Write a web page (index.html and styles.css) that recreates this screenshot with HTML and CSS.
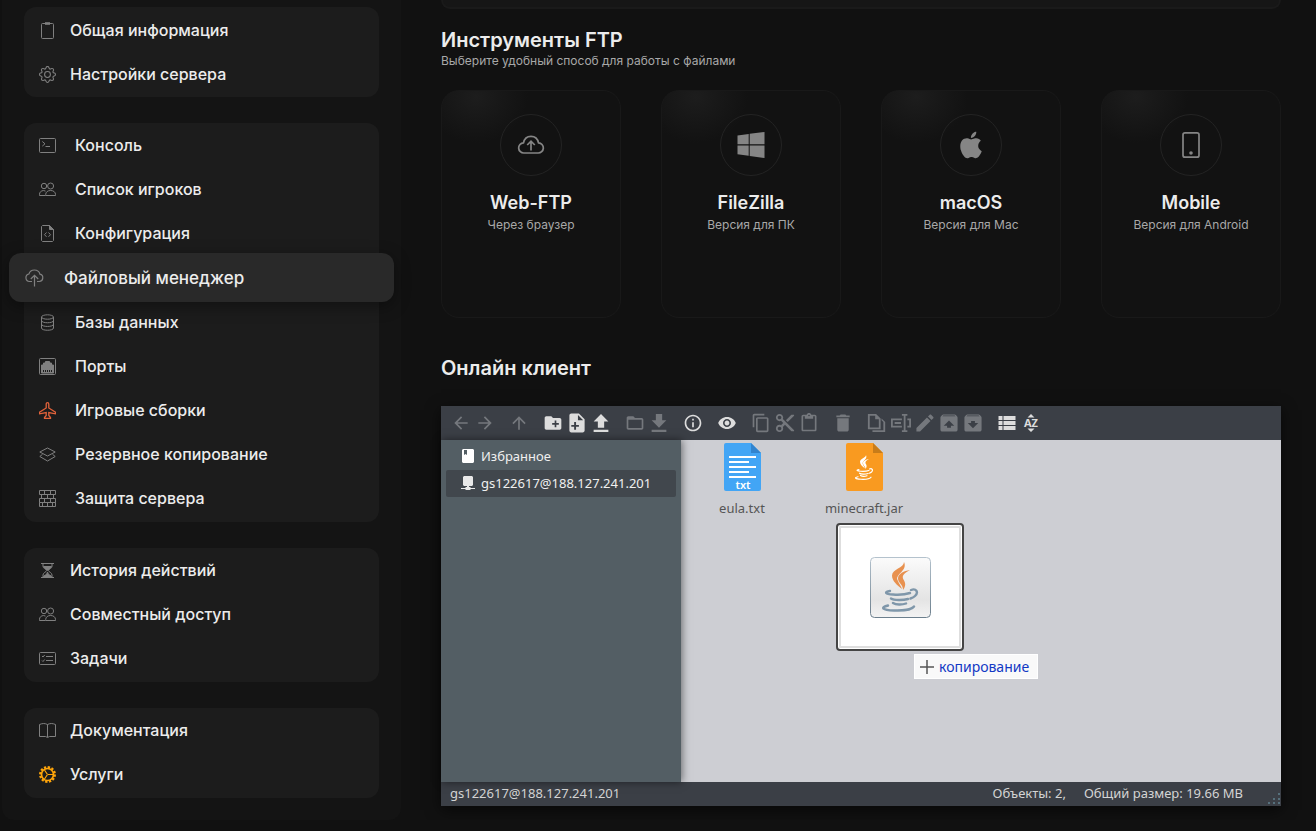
FILE: index.html
```html
<!DOCTYPE html>
<html lang="ru">
<head>
<meta charset="utf-8">
<title>Файловый менеджер</title>
<link rel="stylesheet" href="styles.css">
</head>
<body>
<svg class="sprite" aria-hidden="true">
  <symbol id="users" viewBox="0 0 17 17"><g fill="none" stroke="currentColor"><circle cx="5" cy="5" r="2.700"/><circle cx="11.600" cy="5" r="3"/><path d="M6.700 14.500v-1c0-2.400 2-4 4.900-4s4.900 1.600 4.900 4v1zM6.500 14.500h-6v-1.200c0-2 1.500-3.600 4-3.800l2 .6"/></g></symbol>
  <symbol id="java" viewBox="0 0 40 50">
    <g class="steam" fill="currentColor" stroke="none">
      <path d="M24 0c4 9-9 12-6.500 18 1 3 3.500 6 4.500 9-5-4-10-8-10-13.500C12 7 24 6 24 0z"/>
      <path d="M30 8c-5 3-8 5-7 8.500 1 2.500 4.500 5.500 0 11.500.5-5-5-7-5-11.500C18 11.500 24 9 30 8z"/>
    </g>
    <g fill="none" stroke-linecap="round" stroke-width="2.400"><path d="M10 29c-6 1-5 3 3 3.500 7 .5 13-.2 17-1.500M31 28c5-2 8 2 4 6-1.500 1.500-3 2-4.500 2.500M11 36.500c3 2 12 2 17 .5M13 41c3 2 9 2 13 .5M8 43.500c-8 2-6 4.500 6 5 9 .4 18-1 20-4"/></g>
  </symbol>
</svg>
<div class="layout">
  <nav class="sidebar" aria-label="Меню сервера">
    <div class="menu">
      <a class="item" href="#"><svg viewBox="0 0 17 17"><rect x="2.500" y="1.500" width="12" height="15" rx="1"/><path d="M6 1.500h5" stroke-width="2.600"/></svg>Общая информация</a>
      <a class="item" href="#"><svg class="solid" viewBox="0 0 16 16"><path d="M8 4.754a3.246 3.246 0 1 0 0 6.492 3.246 3.246 0 0 0 0-6.492zM5.754 8a2.246 2.246 0 1 1 4.492 0 2.246 2.246 0 0 1-4.492 0z"/><path d="M9.796 1.343c-.527-1.790-3.065-1.790-3.592 0l-.094.319a.873.873 0 0 1-1.255.52l-.292-.16c-1.640-.892-3.433.902-2.540 2.541l.159.292a.873.873 0 0 1-.52 1.255l-.319.094c-1.790.527-1.790 3.065 0 3.592l.319.094a.873.873 0 0 1 .52 1.255l-.16.292c-.892 1.640.901 3.434 2.541 2.540l.292-.159a.873.873 0 0 1 1.255.52l.094.319c.527 1.790 3.065 1.790 3.592 0l.094-.319a.873.873 0 0 1 1.255-.52l.292.16c1.640.893 3.434-.902 2.540-2.541l-.159-.292a.873.873 0 0 1 .52-1.255l.319-.094c1.790-.527 1.790-3.065 0-3.592l-.319-.094a.873.873 0 0 1-.52-1.255l.16-.292c.893-1.640-.902-3.433-2.541-2.540l-.292.159a.873.873 0 0 1-1.255-.52l-.094-.319zm-2.633.283c.246-.835 1.428-.835 1.674 0l.094.319a1.873 1.873 0 0 0 2.693 1.115l.291-.16c.764-.415 1.600.42 1.184 1.185l-.159.292a1.873 1.873 0 0 0 1.116 2.692l.318.094c.835.246.835 1.428 0 1.674l-.319.094a1.873 1.873 0 0 0-1.115 2.693l.16.291c.415.764-.42 1.600-1.185 1.184l-.291-.159a1.873 1.873 0 0 0-2.693 1.116l-.094.318c-.246.835-1.428.835-1.674 0l-.094-.319a1.873 1.873 0 0 0-2.692-1.115l-.292.16c-.764.415-1.600-.42-1.184-1.185l.159-.291A1.873 1.873 0 0 0 1.945 8.930l-.319-.094c-.835-.246-.835-1.428 0-1.674l.319-.094A1.873 1.873 0 0 0 3.060 4.377l-.16-.292c-.415-.764.42-1.600 1.185-1.184l.292.159a1.873 1.873 0 0 0 2.692-1.115l.094-.319z"/></svg>Настройки сервера</a>
    </div>
    <div class="menu menu-wide">
      <a class="item" href="#"><svg viewBox="0 0 17 17"><rect x=".5" y="1.500" width="16" height="14" rx="1"/><path d="M3.300 4.500l2.700 2.300-2.700 2.300M6.500 9.500h4.500"/></svg>Консоль</a>
      <a class="item" href="#"><svg><use href="#users"/></svg>Список игроков</a>
      <a class="item" href="#"><svg viewBox="0 0 17 17"><path d="M3.500.5h7l4 4v11l-1 1h-10l-1-1v-14z"/><path class="fill" d="M10.500.5l4 4h-4z"/><path d="M7.500 7.500L5.500 9.700l2 2.100M9.500 7.500l2 2.200-2 2.100"/></svg>Конфигурация</a>
      <a class="item active" href="#" aria-current="page"><svg viewBox="0 0 19 18"><path d="M7 12.500H4.500a3.800 3.800 0 0 1-.6-7.500C4.700 2.500 6.700 1 9.300 1c2.900 0 5 1.600 5.600 4.200a3.700 3.700 0 0 1-.6 7.300H12M9.500 17.500V6.500M5.800 10l3.700-3.700 3.700 3.700" stroke-width="1.200"/></svg>Файловый менеджер</a>
      <a class="item" href="#"><svg viewBox="0 0 17 17"><ellipse cx="8.500" cy="3" rx="6" ry="2.200"/><path d="M2.500 3v11c0 3 12 3 12 0V3M2.500 6.500c0 3 12 3 12 0M2.500 10.200c0 3 12 3 12 0"/></svg>Базы данных</a>
      <a class="item" href="#"><svg viewBox="0 0 17 17"><rect x=".5" y=".5" width="16" height="16" rx="1"/><path class="fill" d="M2.500 7h2V5h2V3.500h4V5h2v2h2v8h-12z"/><path class="cut" d="M4.500 12v2M6.500 12v2M8.500 12v2M10.500 12v2M12.500 12v2"/></svg>Порты</a>
      <a class="item plane" href="#"><svg viewBox="0 0 17 17"><path d="M7.200 6V2.200c0-2 2.600-2 2.600 0V6l6.700 4.200v1.600L9.800 10.500v3l1.700 2v1h-6v-1l1.700-2v-3L.5 11.800v-1.600z"/></svg>Игровые сборки</a>
      <a class="item" href="#"><svg viewBox="0 0 17 17"><path d="M.8 6l7.700-4 7.700 4-7.700 4zM3.500 8.300L.8 10.500l7.700 4.500 7.700-4.500-2.700-2.200"/></svg>Резервное копирование</a>
      <a class="item" href="#"><svg viewBox="0 0 17 17"><path d="M.5.5h16v4H.5zM2.500 4.500v4M14.500 4.500v4M8.500 4.500v4M.5 8.500h16v4H.5zM5.500.5v4M11.500.5v4M5.500 8.500v4M11.500 8.500v4M.5 12.500h16v4H.5zM8.500 12.500v4M3.500 12.500v4M13.500 12.500v4"/></svg>Защита сервера</a>
    </div>
    <div class="menu">
      <a class="item" href="#"><svg viewBox="0 0 17 17"><path d="M2 1.500h13M2 15.500h13M4 2v2.500c0 2 3.500 2.500 3.500 4S4 10.500 4 13v2M13 2v2.500c0 2-3.500 2.500-3.500 4s3.500 2 3.500 4.500v2"/><path class="fill" d="M4.500 4.500h8l-4 4zM4.500 15c0-2 4-2 4-5 0 3 4 3 4 5z"/></svg>История действий</a>
      <a class="item" href="#"><svg><use href="#users"/></svg>Совместный доступ</a>
      <a class="item" href="#"><svg viewBox="0 0 17 17"><rect x=".5" y="2.500" width="16" height="12" rx="1"/><path d="M3 6l1 1 1.700-2M3 10.500l1 1 1.700-2M7 6.500h7M7 10.500h7"/></svg>Задачи</a>
    </div>
    <div class="menu">
      <a class="item" href="#"><svg viewBox="0 0 17 17"><path d="M.5 2.500c3-1.300 5.500-1.300 8 0 2.500-1.300 5-1.300 8 0v12h-6l-2 1-2-1h-6zM8.500 2.500v12.500"/></svg>Документация</a>
      <a class="item gear" href="#"><svg viewBox="0 0 17 17"><circle cx="8.500" cy="8.500" r="7.300" stroke-width="2.300" stroke-dasharray="2.300 1.522"/><circle cx="8.500" cy="8.500" r="6" stroke-width="1.700"/><path d="M9 8.500h5M8.500 8.500L5.500 4M8.500 8.500L5.500 13" stroke-width="1.200"/></svg>Услуги</a>
    </div>
  </nav>

  <main class="content">
    <div class="panel-end"></div>
    <section class="tools">
      <h2>Инструменты FTP</h2>
      <p class="lead">Выберите удобный способ для работы с файлами</p>
      <div class="cards">
        <a class="card" href="#"><span class="ring"><svg viewBox="0 0 28 28"><path d="M7 22a5.100 5.100 0 0 1-.5-10.200C7.300 7.800 10.300 5.300 14 5.300s6.700 2.500 7.500 6.500A5.100 5.100 0 0 1 21 22zM14 19.500v-9M10.200 14l3.800-3.800 3.800 3.800" fill="none" stroke="currentColor" stroke-width="1.700"/></svg></span><h3>Web-FTP</h3><p>Через браузер</p></a>
        <a class="card" href="#"><span class="ring"><svg viewBox="0 0 28 28"><path d="M.5 4.500L11.700 3v10.300H.5zM12.700 2.800L27.500 1v12.300H12.700zM.5 14.500h11.200v10.300L.5 23.300zM12.700 14.500h14.800V27l-14.800-2z" fill="currentColor"/></svg></span><h3>FileZilla</h3><p>Версия для ПК</p></a>
        <a class="card" href="#"><span class="ring"><svg viewBox="-.5 -.5 17 17"><path d="M11.182.008C11.148-.03 9.923.023 8.857 1.180c-1.066 1.156-.902 2.482-.878 2.516s1.520.087 2.475-1.258.762-2.391.728-2.430m3.314 11.733c-.048-.096-2.325-1.234-2.113-3.422s1.675-2.789 1.698-2.854-.597-.79-1.254-1.157a3.700 3.700 0 0 0-1.563-.434c-.108-.003-.483-.095-1.254.116-.508.139-1.653.589-1.968.607-.316.018-1.256-.522-2.267-.665-.647-.125-1.333.131-1.824.328-.49.196-1.422.754-2.074 2.237-.652 1.482-.311 3.830-.067 4.560s.625 1.924 1.273 2.796c.576.984 1.340 1.667 1.659 1.899s1.219.386 1.843.067c.502-.308 1.408-.485 1.766-.472.357.013 1.061.154 1.782.539.571.197 1.111.115 1.652-.105.541-.221 1.324-1.059 2.238-2.758q.52-1.185.473-1.282" fill="currentColor"/></svg></span><h3>macOS</h3><p>Версия для Mac</p></a>
        <a class="card" href="#"><span class="ring"><svg viewBox="0 0 28 28"><rect x="6" y="1.800" width="16" height="24.400" rx="2" fill="none" stroke="currentColor" stroke-width="1.700"/><circle cx="14" cy="22" r="1.800" fill="currentColor"/></svg></span><h3>Mobile</h3><p>Версия для Android</p></a>
      </div>
    </section>

    <section class="client">
      <h2>Онлайн клиент</h2>
      <div class="manager">
        <div class="toolbar" role="toolbar" aria-label="Действия с файлами">
          <div class="group">
            <button aria-label="Назад" disabled><svg viewBox="0 0 24 24"><path d="M20 11H7.830l5.590-5.590L12 4l-8 8 8 8 1.410-1.410L7.830 13H20v-2z"/></svg></button>
            <button aria-label="Вперёд" disabled><svg viewBox="0 0 24 24"><path d="M12 4l-1.410 1.410L16.170 11H4v2h12.170l-5.580 5.590L12 20l8-8z"/></svg></button>
          </div>
          <div class="group">
            <button aria-label="Вверх" disabled><svg viewBox="0 0 24 24"><path d="M4 12l1.410 1.410L11 7.830V20h2V7.830l5.580 5.590L20 12l-8-8-8 8z"/></svg></button>
          </div>
          <div class="group">
            <button aria-label="Новая папка"><svg viewBox="0 0 24 24"><path d="M20 6h-8l-2-2H4c-1.110 0-1.990.89-1.990 2L2 18c0 1.110.89 2 2 2h16c1.110 0 2-.89 2-2V8c0-1.110-.89-2-2-2zm-1 8h-3v3h-2v-3h-3v-2h3V9h2v3h3v2z"/></svg></button>
            <button aria-label="Новый файл"><svg viewBox="1.500 1.500 21 21"><path fill-rule="evenodd" d="M14 2H6c-1.100 0-1.990.9-1.990 2L4 20c0 1.100.89 2 1.990 2H18c1.100 0 2-.9 2-2V8l-6-6zM14 16h-3v3H9v-3H6v-2h3v-3h2v3h3zM13 9V3.500L18.500 9z"/></svg></button>
            <button aria-label="Загрузить"><svg viewBox="2.500 2 19 19"><path d="M9 16h6v-6h4l-7-7-7 7h4zm-4 2h14v2H5z"/></svg></button>
          </div>
          <div class="group">
            <button aria-label="Открыть" disabled><svg viewBox="0 0 24 24"><path d="M20 6h-8l-2-2H4c-1.100 0-1.990.9-1.990 2L2 18c0 1.100.9 2 2 2h16c1.100 0 2-.9 2-2V8c0-1.100-.9-2-2-2zm0 12H4V8h16v10z"/></svg></button>
            <button aria-label="Скачать" disabled><svg viewBox="2.500 2 19 19"><path d="M19 9h-4V3H9v6H5l7 7 7-7zM5 18v2h14v-2H5z"/></svg></button>
          </div>
          <div class="group">
            <button aria-label="Свойства"><svg viewBox="0 0 24 24"><path d="M11 17h2v-6h-2v6zm1-15C6.480 2 2 6.480 2 12s4.480 10 10 10 10-4.480 10-10S17.520 2 12 2zm0 18c-4.410 0-8-3.590-8-8s3.590-8 8-8 8 3.590 8 8-3.590 8-8 8zM11 9h2V7h-2v2z"/></svg></button>
          </div>
          <div class="group">
            <button aria-label="Просмотр"><svg viewBox="-.5 -.5 25 25"><path d="M12 4.500C7 4.500 2.730 7.610 1 12c1.730 4.390 6 7.500 11 7.500s9.270-3.110 11-7.500c-1.730-4.390-6-7.500-11-7.500zM12 17c-2.760 0-5-2.240-5-5s2.240-5 5-5 5 2.240 5 5-2.240 5-5 5zm0-8c-1.660 0-3 1.340-3 3s1.340 3 3 3 3-1.340 3-3-1.340-3-3-3z"/></svg></button>
          </div>
          <div class="group">
            <button aria-label="Копировать" disabled><svg viewBox="0 0 24 24"><path d="M16 1H4c-1.100 0-2 .9-2 2v14h2V3h12V1zm3 4H8c-1.100 0-2 .9-2 2v14c0 1.100.9 2 2 2h11c1.100 0 2-.9 2-2V7c0-1.100-.9-2-2-2zm0 16H8V7h11v14z"/></svg></button>
            <button aria-label="Вырезать" disabled><svg viewBox="1 1 22 22"><path d="M9.640 7.640c.23-.5.36-1.050.36-1.640 0-2.210-1.790-4-4-4S2 3.790 2 6s1.790 4 4 4c.59 0 1.140-.13 1.640-.36L10 12l-2.360 2.360C7.140 14.130 6.590 14 6 14c-2.210 0-4 1.790-4 4s1.790 4 4 4 4-1.790 4-4c0-.59-.13-1.140-.36-1.640L12 14l7 7h3v-1L9.640 7.640zM6 8c-1.100 0-2-.89-2-2s.9-2 2-2 2 .89 2 2-.9 2-2 2zm0 12c-1.100 0-2-.89-2-2s.9-2 2-2 2 .89 2 2-.9 2-2 2zM19 3l-6 6 2 2 7-7V3z"/></svg></button>
            <button aria-label="Вставить" disabled><svg viewBox="0 0 24 24"><path d="M19 2h-4.180C14.400.84 13.300 0 12 0c-1.300 0-2.400.84-2.820 2H5c-1.100 0-2 .9-2 2v16c0 1.100.9 2 2 2h14c1.100 0 2-.9 2-2V4c0-1.100-.9-2-2-2zm-7 0c.55 0 1 .45 1 1s-.45 1-1 1-1-.45-1-1 .45-1 1-1zm7 18H5V4h2v3h10V4h2v16z"/></svg></button>
          </div>
          <div class="group">
            <button aria-label="Удалить" disabled><svg viewBox="1.500 1.500 21 21"><path d="M6 19c0 1.100.9 2 2 2h8c1.100 0 2-.9 2-2V7H6v12zM19 4h-3.500l-1-1h-5l-1 1H5v2h14V4z"/></svg></button>
          </div>
          <div class="group">
            <button aria-label="Дублировать" disabled><svg viewBox="2 1 22 22"><path fill-rule="evenodd" d="M3 2h9l5 5v12H3zM5 4v13h10V8h-4V4zM18 7l4 4v11H8v-2h12v-9l-2-2z"/></svg></button>
            <button aria-label="Переименовать" disabled><svg viewBox="1 1 22 22"><path d="M1 7h12v2H3v6h10v2H1zm18 0h4v10h-4v-2h2V9h-2zM5 11h7v2H5zM13 2h6v2h-2v16h2v2h-6v-2h2V4h-2z"/></svg></button>
            <button aria-label="Редактировать" disabled><svg viewBox="1.500 1.500 21 21"><path d="M3 17.250V21h3.750L17.810 9.940l-3.750-3.750L3 17.250zM20.710 7.040c.39-.39.39-1.020 0-1.410l-2.340-2.340c-.39-.39-1.020-.39-1.410 0l-1.830 1.830 3.750 3.750 1.830-1.830z"/></svg></button>
            <button aria-label="Распаковать" disabled><svg viewBox="1.500 1.500 21 21"><path fill-rule="evenodd" d="M20.550 5.220l-1.390-1.680C18.880 3.210 18.470 3 18 3H6c-.47 0-.88.21-1.150.55L3.460 5.220C3.170 5.570 3 6.010 3 6.500V19c0 1.100.89 2 2 2h14c1.100 0 2-.9 2-2V6.500c0-.49-.17-.93-.45-1.280zM12 9.500l5.500 5.500H14v2h-4v-2H6.500L12 9.500zM5.120 5l.82-1h12l.93 1H5.120z"/></svg></button>
            <button aria-label="Архивировать" disabled><svg viewBox="1.500 1.500 21 21"><path fill-rule="evenodd" d="M20.550 5.220l-1.390-1.680C18.880 3.210 18.470 3 18 3H6c-.47 0-.88.21-1.150.55L3.460 5.220C3.170 5.570 3 6.010 3 6.500V19c0 1.100.89 2 2 2h14c1.100 0 2-.9 2-2V6.500c0-.49-.17-.93-.45-1.280zM12 17.500L6.500 12H10v-2h4v2h3.500L12 17.500zM5.120 5l.82-1h12l.93 1H5.120z"/></svg></button>
          </div>
          <div class="group">
            <button aria-label="Вид списком"><svg viewBox="2.500 2 20 20"><path d="M4 14h4v-4H4v4zm0 5h4v-4H4v4zM4 9h4V5H4v4zm5 5h12v-4H9v4zm0 5h12v-4H9v4zM9 5v4h12V5H9z"/></svg></button>
            <button aria-label="Сортировка"><svg viewBox="0 0 20 20"><path d="M10 1l3.500 3.500h-7zM10 19l3.500-3.500h-7z"/><text class="sort" x="10" y="14" text-anchor="middle">AZ</text></svg></button>
          </div>
        </div>
        <div class="workspace">
          <div class="tree">
            <a class="node" href="#"><svg viewBox="0 0 14 14"><path fill="#fff" fill-rule="evenodd" d="M2 0h10l1 1v12l-1 1H2l-1-1V1zM3 1v5l1.500-1L6 6V1z"/></svg>Избранное</a>
            <a class="node selected" href="#"><svg viewBox="0 0 14 14"><path fill="#e8e8e8" d="M3 0h8l1 1v8l-1 1H8v1h1l1 1h4v1h-4l-1 1H5l-1-1H0v-1h4l1-1h1v-1H3L2 9V1z"/></svg>gs122617@188.127.241.201</a>
          </div>
          <div class="files">
            <a class="file" href="#"><svg viewBox="0 0 37 48"><path fill="#42a5f5" d="M2 0h25l10 10v36a2 2 0 0 1-2 2H2a2 2 0 0 1-2-2V2a2 2 0 0 1 2-2z"/><path fill="#3284ce" d="M27 0l10 10H27z"/><path stroke="#fff" stroke-width="2" d="M5 14h27M5 19h20M5 24h27M5 29h20M5 34h27"/><text class="ext" x="19" y="46" text-anchor="middle">txt</text></svg><span>eula.txt</span></a>
            <a class="file" href="#"><svg viewBox="0 0 37 48"><path fill="#f99a20" d="M2 0h25l10 10v36a2 2 0 0 1-2 2H2a2 2 0 0 1-2-2V2a2 2 0 0 1 2-2z"/><path fill="#c87c19" d="M27 0l10 10H27z"/><use class="java-white" href="#java" x="8" y="12" width="20" height="25"/></svg><span>minecraft.jar</span></a>
            <div class="ghost"><svg viewBox="0 0 61 61"><defs><linearGradient id="tile" x2="0" y2="1"><stop stop-color="#fbfbfb"/><stop offset="0.7" stop-color="#e4e4e4"/><stop offset="1" stop-color="#f3f3f3"/></linearGradient><linearGradient id="edge" x2="0" y2="1"><stop stop-color="#b4c2cd"/><stop offset="1" stop-color="#6c7f8d"/></linearGradient></defs><rect x=".5" y=".5" width="60" height="60" rx="4" fill="url(#tile)" stroke="url(#edge)"/><use class="java-color" href="#java" x="10" y="5" width="40" height="50"/></svg></div>
            <div class="drop-hint"><svg viewBox="0 0 14 14"><path d="M7 0v14M0 7h14" stroke="#555" stroke-width="1.500"/></svg>копирование</div>
          </div>
        </div>
        <div class="status">
          <span class="path">gs122617@188.127.241.201</span>
          <span>Объекты: 2,</span>
          <span>Общий размер: 19.66 MB</span>
          <svg class="grip" viewBox="0 0 12 12"><path d="M10 0h2v2h-2zM5 5h2v2H5zM10 5h2v2h-2zM0 9h2v2H0zM5 9h2v2H5zM10 9h2v2h-2z"/></svg>
        </div>
      </div>
    </section>
  </main>
</div>
</body>
</html>
```
FILE: styles.css
```css
* { box-sizing: border-box; }

body {
  margin: 0;
  background: #111111;
  color: #ececec;
  font-family: Inter, "Liberation Sans", sans-serif;
}

a { color: inherit; text-decoration: none; }
h2, h3, p { margin: 0; }
.sprite { position: absolute; width: 0; height: 0; }

.layout { display: flex; align-items: flex-start; }

/* Side menu */
.sidebar {
  flex: 0 0 399px;
  display: flex;
  flex-direction: column;
  gap: 26px;
  margin-left: 2px;
  padding: 7px 22px 22px;
  background: #141414;
  border-radius: 0 0 12px 12px;
}

.menu { padding: 1px 0; background: #1c1c1c; border-radius: 12px; }
.menu + .menu { padding: 0 0 2px; }

.item {
  display: flex;
  align-items: center;
  gap: 14px;
  height: 44px;
  padding: 0 15px;
  font-size: 16px;
  font-weight: 500;
}

.menu-wide .item { gap: 19px; }

.item svg {
  flex: none;
  width: 17px;
  height: 17px;
  color: #808080;
  fill: none;
  stroke: currentColor;
}

.item .solid { fill: currentColor; stroke: none; }
.item .fill { fill: currentColor; }
.item .cut { stroke: #1c1c1c; }
.item.plane svg { color: #e2623a; stroke-width: 1.3; }
.item.gear svg { color: #ffa50a; }

.menu-wide .active {
  position: relative;
  gap: 20px;
  height: 49px;
  margin: -2px -15px;
  padding: 0 16px;
  background: #292929;
  border-radius: 12px;
  box-shadow: 0 4px 16px rgba(0, 0, 0, 0.4);
  font-size: 17px;
}

.item.active svg { width: 19px; height: 18px; }

/* Main column */
.content { flex: 1; min-width: 0; padding: 0 35px 0 40px; }

.panel-end {
  height: 9px;
  background: #161616;
  border: 2px solid #1a1a1a;
  border-top: 0;
  border-radius: 0 0 12px 12px;
}

h2 { font-size: 20px; font-weight: 600; line-height: 24px; }
.tools { padding-top: 19px; }
.lead { color: #a8a8a8; font-size: 12px; line-height: 18px; }

.cards {
  display: grid;
  grid-template-columns: repeat(4, 1fr);
  gap: 40px;
  margin-top: 20px;
}

.card {
  display: flex;
  flex-direction: column;
  align-items: center;
  min-height: 228px;
  padding: 23px 8px;
  border: 1px solid #191919;
  border-radius: 18px;
  background: radial-gradient(ellipse 52px 46px at 34px 6px, #1d1d1d, #121212);
  text-align: center;
}

.ring {
  display: flex;
  align-items: center;
  justify-content: center;
  width: 62px;
  height: 62px;
  border: 1px solid #232323;
  border-radius: 50%;
  color: #858585;
}

.ring svg { width: 28px; height: 28px; }

.card h3 { margin-top: 15px; font-size: 18px; font-weight: 600; line-height: 24px; }
.card p { color: #a8a8a8; font-size: 12px; line-height: 20px; }

.client { padding-top: 38px; }

/* File manager */
.manager {
  margin-top: 26px;
  font-family: "Noto Sans", "Open Sans", sans-serif;
  font-size: 13px;
  box-shadow: 0 4px 14px rgba(0, 0, 0, 0.6);
}

.toolbar {
  display: flex;
  gap: 10px;
  height: 34px;
  padding: 0 8px;
  background: #3b3f46;
}

.group { display: flex; }

.toolbar button {
  display: flex;
  align-items: center;
  justify-content: center;
  width: 24px;
  padding: 0;
  border: 0;
  background: none;
  color: #dddddd;
}

.toolbar button:disabled { color: #75787d; }
.toolbar svg { width: 20px; height: 20px; fill: currentColor; }
.sort { font: 700 11px "Open Sans", sans-serif; }

.workspace { display: flex; min-height: 342px; background: #cdced3; }

.tree {
  z-index: 1;
  flex: 0 0 240px;
  display: flex;
  flex-direction: column;
  padding: 3px 5px;
  background: #535e64;
  color: #f0f0f0;
  box-shadow: 1px 0 8px rgba(0, 0, 0, 0.5);
}

.node {
  display: flex;
  align-items: center;
  gap: 6px;
  height: 27px;
  padding: 0 0 2px 15px;
  border-radius: 2px;
}

.node svg { width: 14px; height: 14px; }
.selected { background: #41474d; }

.files {
  position: relative;
  flex: 1;
  display: flex;
  align-items: flex-start;
  padding-top: 3px;
  overflow: hidden;
}

.file {
  display: flex;
  flex-direction: column;
  align-items: center;
  gap: 8px;
  width: 122px;
  color: #555555;
  line-height: 18px;
}

.file svg { width: 37px; height: 48px; }
.ext { fill: #ffffff; font: 600 11px "Noto Sans", sans-serif; }
.java-white { color: #ffffff; stroke: #ffffff; }
.java-color { color: #e8914f; stroke: #7f97aa; }

.ghost {
  position: absolute;
  left: 155px;
  top: 83px;
  display: flex;
  align-items: center;
  justify-content: center;
  width: 128px;
  height: 128px;
  border: 2px solid #444444;
  border-radius: 4px;
  background: #ffffff;
  box-shadow: inset 0 0 0 1px #ffffff, inset 0 0 0 3px #dedede;
}

.ghost svg { width: 61px; height: 61px; }

.drop-hint {
  position: absolute;
  left: 233px;
  top: 214px;
  display: flex;
  align-items: center;
  gap: 5px;
  height: 25px;
  padding: 0 8px 0 5px;
  background: #f9f9f9;
  border: 1px solid #ffffff;
  color: #1238c4;
  font-size: 14px;
}

.drop-hint svg { width: 14px; height: 14px; }

.status {
  position: relative;
  display: flex;
  align-items: center;
  gap: 18px;
  height: 24px;
  padding: 0 38px 2px 9px;
  background: #3b3f46;
  color: #d4d4d4;
}

.path { flex: 1; }
.grip { position: absolute; right: 1px; bottom: 1px; width: 12px; height: 12px; fill: #56707c; }
```
